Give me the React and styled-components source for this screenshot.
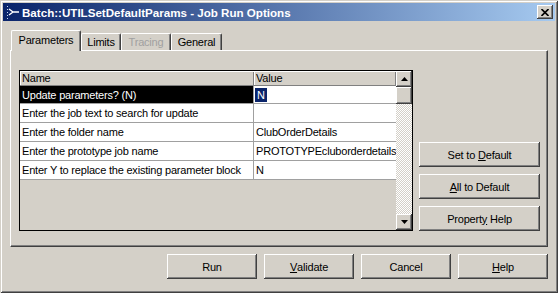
import React from "react";
import styled, { createGlobalStyle } from "styled-components";

const GlobalStyle = createGlobalStyle`
  html, body {
    margin: 0;
    padding: 0;
    background: #d4d0c8;
  }
  body {
    font-family: "Liberation Sans", Arial, sans-serif;
    font-size: 11px;
    letter-spacing: -0.2px;
    color: #000;
  }
`;

const raised = `
  background: #d4d0c8;
  box-shadow: inset -1px -1px #404040, inset 1px 1px #fff,
    inset -2px -2px #808080, inset 2px 2px #d4d0c8;
`;

const Window = styled.div`
  width: 558px;
  height: 293px;
  box-sizing: border-box;
  padding: 3px;
  background: #d4d0c8;
  box-shadow: inset 1px 1px #d4d0c8, inset -1px -1px #404040,
    inset 2px 2px #fff, inset -2px -2px #808080;
  display: flex;
  flex-direction: column;
`;

const TitleBar = styled.div`
  height: 18px;
  display: flex;
  align-items: center;
  padding: 0 2px 0 3px;
  background: linear-gradient(90deg, #0a246a, #a6caf0);
`;

const Caption = styled.span`
  flex: 1;
  margin-left: 2px;
  color: #fff;
  font-weight: bold;
  font-size: 11.6px;
  letter-spacing: 0;
  white-space: nowrap;
`;

const CloseButton = styled.div`
  ${raised}
  width: 16px;
  height: 14px;
  display: flex;
  align-items: center;
  justify-content: center;
`;

const Body = styled.div`
  flex: 1;
  display: flex;
  flex-direction: column;
  padding: 9px 7px 0 7px;
`;

const TabStrip = styled.div`
  height: 20px;
  display: flex;
  align-items: flex-end;
  padding-left: 1px;
`;

const Tab = styled.div`
  box-sizing: border-box;
  width: ${(p) => p.$w}px;
  height: ${(p) => (p.$active ? 21 : 17)}px;
  margin-bottom: ${(p) => (p.$active ? -1 : 0)}px;
  position: relative;
  z-index: ${(p) => (p.$active ? 1 : 0)};
  background: #d4d0c8;
  border-top: 1px solid #fff;
  border-left: 1px solid #fff;
  border-right: 1px solid #404040;
  border-radius: 2px 2px 0 0;
  box-shadow: inset -1px 0 #808080;
  display: flex;
  align-items: center;
  justify-content: center;
  padding-bottom: ${(p) => (p.$active ? 2 : 0)}px;
  color: ${(p) => (p.$disabled ? "#a0a0a0" : "#000")};
  white-space: nowrap;
`;

const Panel = styled.div`
  box-sizing: border-box;
  height: 197px;
  display: flex;
  gap: 6px;
  padding: 19px 7px 15px 8px;
  border-top: 1px solid #fff;
  border-left: 1px solid #fff;
  border-right: 1px solid #404040;
  border-bottom: 1px solid #404040;
  box-shadow: inset -1px -1px #808080;
`;

const Grid = styled.div`
  width: 394px;
  box-sizing: border-box;
  border: 1px solid #000;
  background: #d4d0c8;
  display: flex;
`;

const Table = styled.div`
  flex: 1;
  display: flex;
  flex-direction: column;
`;

const Row = styled.div`
  display: grid;
  grid-template-columns: 234px 1fr;
  height: ${(p) => p.$h}px;
  box-sizing: border-box;
  background: ${(p) => (p.$head ? "#d4d0c8" : "#fff")};
  border-bottom: 1px solid ${(p) => (p.$head ? "#808080" : "#a0a0a0")};
`;

const Cell = styled.div`
  box-sizing: border-box;
  padding: 0 2px;
  display: flex;
  align-items: center;
  white-space: nowrap;
  overflow: hidden;
  border-right: ${(p) => (p.$last ? "none" : "1px solid #a0a0a0")};
  background: ${(p) => (p.$selected ? "#000" : "transparent")};
  color: ${(p) => (p.$selected ? "#fff" : "#000")};
`;

const HeadCell = styled.div`
  box-sizing: border-box;
  padding: 0 2px;
  display: flex;
  align-items: center;
  box-shadow: inset 1px 1px #fff, inset -1px 0 #808080;
`;

const Highlight = styled.span`
  background: #0a246a;
  color: #fff;
  padding: 0 1px;
  outline: 1px solid #0a246a;
`;

const ScrollBar = styled.div`
  width: 16px;
  display: flex;
  flex-direction: column;
`;

const ScrollButton = styled.div`
  ${raised}
  height: 16px;
  display: flex;
  align-items: center;
  justify-content: center;
`;

const Thumb = styled.div`
  ${raised}
  height: 17px;
`;

const Track = styled.div`
  flex: 1;
  background: repeating-conic-gradient(#d4d0c8 0 25%, #fff 0 50%) 0 0 / 2px 2px;
`;

const SideButtons = styled.div`
  display: flex;
  flex-direction: column;
  justify-content: flex-end;
  gap: 7px;
`;

const Button = styled.div`
  ${raised}
  width: ${(p) => p.$w}px;
  height: 25px;
  box-sizing: border-box;
  display: flex;
  align-items: center;
  justify-content: center;
  white-space: nowrap;
`;

const Footer = styled.div`
  display: flex;
  justify-content: flex-end;
  gap: 7px;
  margin-top: 7px;
`;

const AppIcon = () => (
  <svg width="14" height="14" viewBox="0 0 14 14">
    <g fill="#c8d8f0">
      <rect x="1" y="1" width="1" height="1" />
      <rect x="1" y="4" width="1" height="1" />
      <rect x="1" y="7" width="1" height="1" />
      <rect x="1" y="10" width="1" height="1" />
      <rect x="1" y="13" width="1" height="1" />
    </g>
    <path d="M3 4 L7 7 L3 10 M6 7 H13" stroke="#fff" strokeWidth="1.4" fill="none" />
  </svg>
);

const CloseIcon = () => (
  <svg width="8" height="7" viewBox="0 0 8 7">
    <path d="M0.5 0 L7.5 7 M7.5 0 L0.5 7" stroke="#000" strokeWidth="1.6" />
  </svg>
);

const Arrow = ({ down }) => (
  <svg width="7" height="4" viewBox="0 0 7 4">
    <path d={down ? "M0 0 H7 L3.5 4 Z" : "M0 4 H7 L3.5 0 Z"} fill="#000" />
  </svg>
);

const params = [
  ["Update parameters? (N)", "N"],
  ["Enter the job text to search for update", ""],
  ["Enter the folder name", "ClubOrderDetails"],
  ["Enter the prototype job name", "PROTOTYPEcluborderdetails"],
  ["Enter Y to replace the existing parameter block", "N"],
];

export default function App() {
  return (
    <>
      <GlobalStyle />
      <Window>
        <TitleBar>
          <AppIcon />
          <Caption>Batch::UTILSetDefaultParams - Job Run Options</Caption>
          <CloseButton>
            <CloseIcon />
          </CloseButton>
        </TitleBar>
        <Body>
          <TabStrip>
            <Tab $w={70} $active>Parameters</Tab>
            <Tab $w={40}>Limits</Tab>
            <Tab $w={50} $disabled>Tracing</Tab>
            <Tab $w={51}>General</Tab>
          </TabStrip>
          <Panel>
            <Grid>
              <Table>
                <Row $head $h={15}>
                  <HeadCell>Name</HeadCell>
                  <HeadCell>Value</HeadCell>
                </Row>
                {params.map(([name, value], i) => (
                  <Row key={name} $h={i === 0 ? 18 : 19}>
                    <Cell $selected={i === 0}>{name}</Cell>
                    <Cell $last>
                      {i === 0 ? <Highlight>{value}</Highlight> : value}
                    </Cell>
                  </Row>
                ))}
              </Table>
              <ScrollBar>
                <ScrollButton>
                  <Arrow />
                </ScrollButton>
                <Thumb />
                <Track />
                <ScrollButton>
                  <Arrow down />
                </ScrollButton>
              </ScrollBar>
            </Grid>
            <SideButtons>
              <Button $w={121}>
                Set to&nbsp;<u>D</u>efault
              </Button>
              <Button $w={121}>
                <u>A</u>ll to Default
              </Button>
              <Button $w={121}>
                Propert<u>y</u>&nbsp;Help
              </Button>
            </SideButtons>
          </Panel>
          <Footer>
            <Button $w={90}>Run</Button>
            <Button $w={90}>
              <u>V</u>alidate
            </Button>
            <Button $w={90}>Cancel</Button>
            <Button $w={90}>
              <u>H</u>elp
            </Button>
          </Footer>
        </Body>
      </Window>
    </>
  );
}
